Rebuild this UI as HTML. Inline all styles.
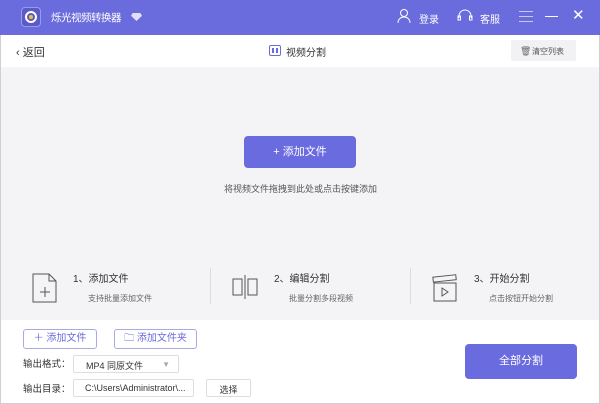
<!DOCTYPE html>
<html><head><meta charset="utf-8"><style>
*{margin:0;padding:0;box-sizing:border-box}
body{width:600px;height:404px;overflow:hidden;background:#fff;font-family:"Liberation Sans","Noto Sans CJK SC",sans-serif;position:relative;color:#333}
.a{position:absolute}
.hdr{left:0;top:0;width:600px;height:35px;background:#6a6bdc}
.w{color:#fff;font-size:11px}
.gray{left:1px;top:67px;width:598px;height:253px;background:#f4f4f6}
.btn{border:1px solid #a9a9e6;border-radius:3px;color:#6a6bdc;font-size:10px;text-align:center;background:#fff}
.box{border:1px solid #ddd;border-radius:2px;background:#fff;font-size:9px;color:#333}
.s{font-size:10px;color:#333}
.t{font-size:8px;color:#666}
</style></head><body>
<div class="a" style="left:0;top:0;width:600px;height:404px;border:1px solid #d0d0d0"></div>
<div class="a hdr"></div>
<div class="a" style="left:21px;top:7px;width:20px;height:20px;border-radius:4px;background:#5a5bc8;border:1px solid #9a9be6"></div>
<div class="a" style="left:25px;top:11px;width:12px;height:12px;border-radius:50%;border:2px solid #fff"></div>
<div class="a" style="left:29px;top:15px;width:4px;height:4px;border-radius:50%;background:#f5c030"></div>
<div class="a w" style="left:51px;top:10px;font-size:10.5px;letter-spacing:-0.5px">烁光视频转换器</div>
<div class="a" style="left:131px;top:13px;width:11px;height:8px;background:#e0e0f5;clip-path:polygon(15% 0,85% 0,100% 35%,50% 100%,0 35%)"></div>
<svg class="a" style="left:396px;top:8px" width="16" height="16" viewBox="0 0 16 16" fill="none" stroke="#fff" stroke-width="1"><circle cx="8" cy="5" r="3.5"/><path d="M2 15c0-4 3-6 6-6s6 2 6 6"/></svg>
<div class="a w" style="left:419px;top:11px;font-size:10px">登录</div>
<svg class="a" style="left:457px;top:9px" width="16" height="14" viewBox="0 0 16 14" fill="none" stroke="#fff" stroke-width="1"><path d="M2 9V7a6 6 0 0 1 12 0v2"/><rect x="1" y="7" width="2.5" height="4"/><rect x="12.5" y="7" width="2.5" height="4"/></svg>
<div class="a w" style="left:480px;top:11px;font-size:10px">客服</div>
<div class="a" style="left:519px;top:11px;width:14px;height:1px;background:#c8c8f0;box-shadow:0 5px 0 #c8c8f0,0 10px 0 #c8c8f0"></div>
<div class="a" style="left:545px;top:16px;width:13px;height:1px;background:#fff"></div>
<div class="a" style="left:572px;top:10px;font-size:15px;color:#fff;line-height:12px">✕</div>
<div class="a" style="left:16px;top:44px;font-size:11px;color:#333">‹ 返回</div>
<div class="a" style="left:269px;top:45px;width:12px;height:11px;border:1px solid #6a6bdc;border-radius:2px"></div>
<div class="a" style="left:272px;top:48px;width:2px;height:5px;background:#6a6bdc;box-shadow:4px 0 0 #6a6bdc"></div>
<div class="a s" style="left:286px;top:44px">视频分割</div>
<div class="a" style="left:511px;top:40px;width:65px;height:21px;background:#f2f2f4;border-radius:2px"></div>
<div class="a" style="left:520px;top:46px;font-size:9px;color:#666">🗑</div>
<div class="a" style="left:532px;top:46px;font-size:8px;color:#555">清空列表</div>
<div class="a gray"></div>
<div class="a" style="left:244px;top:136px;width:112px;height:32px;background:#6b6be0;border-radius:4px;color:#fff;font-size:11px;text-align:center;line-height:32px">+ 添加文件</div>
<div class="a" style="left:224px;top:182px;font-size:9px;color:#555">将视频文件拖拽到此处或点击按键添加</div>
<svg class="a" style="left:30px;top:273px" width="28" height="30" viewBox="0 0 28 30" fill="none" stroke="#555" stroke-width="1"><path d="M3 1h16l7 7v21H3z"/><path d="M19 1v7h7"/><path d="M15 14v10M10 19h10"/></svg>
<div class="a s" style="left:73px;top:270px">1、添加文件</div>
<div class="a t" style="left:88px;top:293px">支持批量添加文件</div>
<div class="a" style="left:210px;top:268px;width:1px;height:36px;background:#ddd"></div>
<svg class="a" style="left:232px;top:275px" width="26" height="24" viewBox="0 0 26 24" fill="none" stroke="#555" stroke-width="1"><rect x="1" y="4" width="9" height="16"/><rect x="16" y="4" width="9" height="16"/><path d="M13 0v24"/></svg>
<div class="a s" style="left:274px;top:270px">2、编辑分割</div>
<div class="a t" style="left:289px;top:293px">批量分割多段视频</div>
<div class="a" style="left:410px;top:268px;width:1px;height:36px;background:#ddd"></div>
<svg class="a" style="left:432px;top:273px" width="26" height="30" viewBox="0 0 26 30" fill="none" stroke="#555" stroke-width="1"><rect x="1" y="3" width="23" height="5" transform="rotate(-6 12 5)"/><rect x="2" y="10" width="22" height="18"/><path d="M10 15v8l6-4z"/></svg>
<div class="a s" style="left:474px;top:270px">3、开始分割</div>
<div class="a t" style="left:489px;top:293px">点击按钮开始分割</div>
<div class="a btn" style="left:23px;top:329px;width:74px;height:20px;line-height:18px">＋ 添加文件</div>
<div class="a btn" style="left:114px;top:329px;width:83px;height:20px;line-height:18px">🗀 添加文件夹</div>
<div class="a s" style="left:23px;top:356px;font-size:9.5px">输出格式：</div>
<div class="a box" style="left:73px;top:355px;width:106px;height:18px;padding:3px 0 0 12px">MP4 同原文件<span style="position:absolute;right:8px;top:4px;color:#aaa;font-size:8px">▼</span></div>
<div class="a s" style="left:23px;top:381px;font-size:9.5px">输出目录：</div>
<div class="a box" style="left:73px;top:379px;width:121px;height:18px;padding:3px 0 0 11px">C:\Users\Administrator\...</div>
<div class="a box" style="left:206px;top:379px;width:45px;height:18px;text-align:center;padding-top:3px">选择</div>
<div class="a" style="left:465px;top:344px;width:112px;height:35px;background:#6b6be0;border-radius:4px;color:#fff;font-size:11px;text-align:center;line-height:35px">全部分割</div>
</body></html>
